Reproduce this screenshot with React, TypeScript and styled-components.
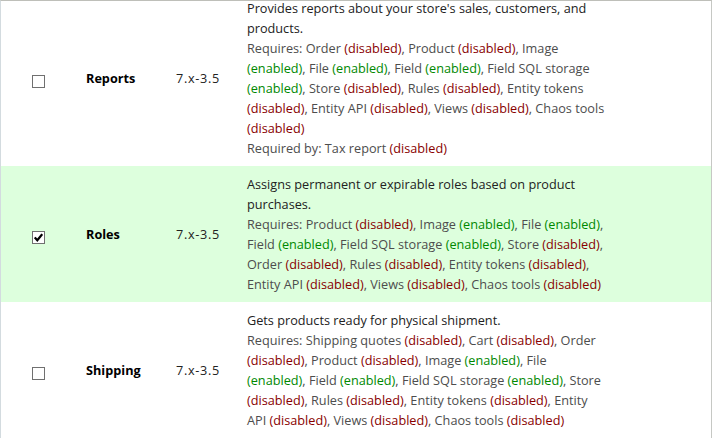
import React from 'react'
import styled, { createGlobalStyle } from 'styled-components'

const GlobalStyle = createGlobalStyle`
    html, body {
        margin: 0;
        padding: 0;
        background: #fff;
    }
    body {
        font-family: "Open Sans", "Noto Sans", sans-serif;
        font-size: 12.7px;
        line-height: 20px;
        color: #222;
    }
`

type Dependency = { name: string; enabled: boolean }

type Module = {
    name: string
    version: string
    checked: boolean
    description: string
    requires: Dependency[]
    requiredBy?: Dependency[]
}

const dep = (name: string, enabled = false): Dependency => ({ name, enabled })

const MODULES: Module[] = [
    {
        name: 'Reports',
        version: '7.x-3.5',
        checked: false,
        description: "Provides reports about your store's sales, customers, and products.",
        requires: [
            dep('Order'),
            dep('Product'),
            dep('Image', true),
            dep('File', true),
            dep('Field', true),
            dep('Field SQL storage', true),
            dep('Store'),
            dep('Rules'),
            dep('Entity tokens'),
            dep('Entity API'),
            dep('Views'),
            dep('Chaos tools'),
        ],
        requiredBy: [dep('Tax report')],
    },
    {
        name: 'Roles',
        version: '7.x-3.5',
        checked: true,
        description: 'Assigns permanent or expirable roles based on product purchases.',
        requires: [
            dep('Product'),
            dep('Image', true),
            dep('File', true),
            dep('Field', true),
            dep('Field SQL storage', true),
            dep('Store'),
            dep('Order'),
            dep('Rules'),
            dep('Entity tokens'),
            dep('Entity API'),
            dep('Views'),
            dep('Chaos tools'),
        ],
    },
    {
        name: 'Shipping',
        version: '7.x-3.5',
        checked: false,
        description: 'Gets products ready for physical shipment.',
        requires: [
            dep('Shipping quotes'),
            dep('Cart'),
            dep('Order'),
            dep('Product'),
            dep('Image', true),
            dep('File', true),
            dep('Field', true),
            dep('Field SQL storage', true),
            dep('Store'),
            dep('Rules'),
            dep('Entity tokens'),
            dep('Entity API'),
            dep('Views'),
            dep('Chaos tools'),
        ],
    },
]

const Frame = styled.div`
    width: 710px;
    height: 437px;
    overflow: hidden;
    border-top: 1px solid #bebfb9;
    border-left: 1px solid #d3dbdf;
    border-right: 1px solid #c6c8c4;
    margin-right: 1px;
`

const ModuleTable = styled.table`
    width: 710px;
    margin-top: -11px;
    border-collapse: collapse;
    table-layout: fixed;
`

const Row = styled.tr<{ $selected: boolean }>`
    background: ${({ $selected }) => ($selected ? '#ddffdd' : '#fff')};
`

const Cell = styled.td<{ $width: number }>`
    width: ${({ $width }) => $width}px;
    box-sizing: border-box;
    padding: 8px 10px;
    vertical-align: middle;
`

const CheckCell = styled(Cell)`
    padding: 8px 0;
    text-align: center;
`

const CheckBox = styled.span`
    display: inline-flex;
    align-items: center;
    justify-content: center;
    box-sizing: border-box;
    width: 13px;
    height: 13px;
    margin-top: 3px;
    border: 1px solid #707070;
    background: #fff;
    vertical-align: middle;
`

const Name = styled.strong`
    font-weight: 700;
    color: #000;
`

const Version = styled.span`
    color: #222;
    letter-spacing: 0.7px;
`

const Description = styled.div`
    color: #222;
`

const Requirements = styled.div`
    color: #4d4d4d;
`

const Status = styled.span<{ $enabled: boolean }>`
    color: ${({ $enabled }) => ($enabled ? '#008800' : '#880000')};
`

function DependencyList({ label, items }: { label: string; items: Dependency[] }) {
    return (
        <Requirements>
            {label}:{' '}
            {items.map((item, i) => (
                <React.Fragment key={item.name}>
                    {i > 0 && ', '}
                    {item.name} <Status $enabled={item.enabled}>({item.enabled ? 'enabled' : 'disabled'})</Status>
                </React.Fragment>
            ))}
        </Requirements>
    )
}

function Check({ checked }: { checked: boolean }) {
    return (
        <CheckBox>
            {checked && (
                <svg width="9" height="9" viewBox="0 0 9 9">
                    <path d="M0.8 4.4 L3.3 7.2 L8.2 1.2" fill="none" stroke="#000" strokeWidth="2.2" />
                </svg>
            )}
        </CheckBox>
    )
}

export default function App(): JSX.Element {
    return (
        <>
            <GlobalStyle />
            <Frame>
                <ModuleTable>
                    <tbody>
                        {MODULES.map((m) => (
                            <Row key={m.name} $selected={m.checked}>
                                <CheckCell $width={75}>
                                    <Check checked={m.checked} />
                                </CheckCell>
                                <Cell $width={90}>
                                    <Name>{m.name}</Name>
                                </Cell>
                                <Cell $width={71}>
                                    <Version>{m.version}</Version>
                                </Cell>
                                <Cell $width={380}>
                                    <Description>{m.description}</Description>
                                    <DependencyList label="Requires" items={m.requires} />
                                    {m.requiredBy && <DependencyList label="Required by" items={m.requiredBy} />}
                                </Cell>
                                <Cell $width={94} />
                            </Row>
                        ))}
                    </tbody>
                </ModuleTable>
            </Frame>
        </>
    )
}
